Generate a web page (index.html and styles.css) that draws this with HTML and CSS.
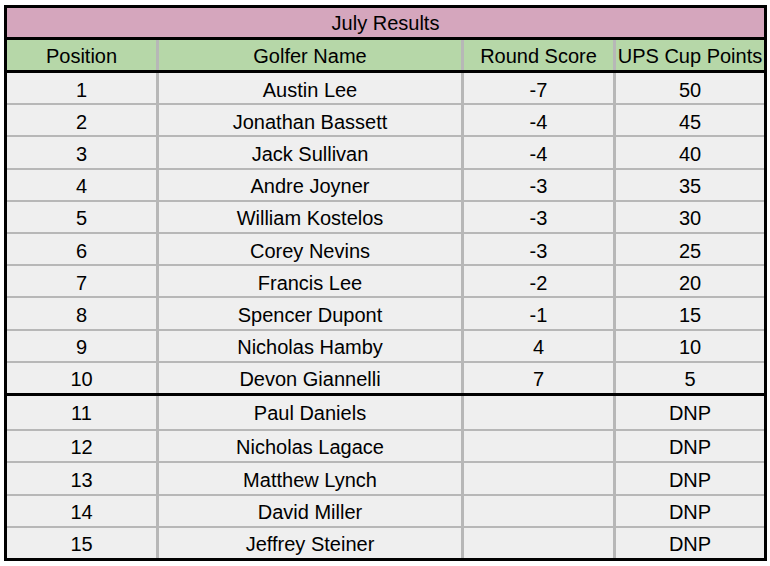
FILE: index.html
```html
<!DOCTYPE html>
<html lang="en">
<head>
<meta charset="utf-8">
<title>July Results</title>
<link rel="stylesheet" href="styles.css">
</head>
<body>
<div class="sheet">
  <div class="title">July Results</div>
  <div class="row head">
    <div class="cell">Position</div>
    <div class="cell">Golfer Name</div>
    <div class="cell">Round Score</div>
    <div class="cell">UPS Cup Points</div>
  </div>
  <div class="group top">
    <div class="row"><div class="cell">1</div><div class="cell">Austin Lee</div><div class="cell">-7</div><div class="cell">50</div></div>
    <div class="row"><div class="cell">2</div><div class="cell">Jonathan Bassett</div><div class="cell">-4</div><div class="cell">45</div></div>
    <div class="row"><div class="cell">3</div><div class="cell">Jack Sullivan</div><div class="cell">-4</div><div class="cell">40</div></div>
    <div class="row"><div class="cell">4</div><div class="cell">Andre Joyner</div><div class="cell">-3</div><div class="cell">35</div></div>
    <div class="row"><div class="cell">5</div><div class="cell">William Kostelos</div><div class="cell">-3</div><div class="cell">30</div></div>
    <div class="row"><div class="cell">6</div><div class="cell">Corey Nevins</div><div class="cell">-3</div><div class="cell">25</div></div>
    <div class="row"><div class="cell">7</div><div class="cell">Francis Lee</div><div class="cell">-2</div><div class="cell">20</div></div>
    <div class="row"><div class="cell">8</div><div class="cell">Spencer Dupont</div><div class="cell">-1</div><div class="cell">15</div></div>
    <div class="row"><div class="cell">9</div><div class="cell">Nicholas Hamby</div><div class="cell">4</div><div class="cell">10</div></div>
    <div class="row"><div class="cell">10</div><div class="cell">Devon Giannelli</div><div class="cell">7</div><div class="cell">5</div></div>
  </div>
  <div class="group bottom">
    <div class="row tall"><div class="cell">11</div><div class="cell">Paul Daniels</div><div class="cell"></div><div class="cell">DNP</div></div>
    <div class="row"><div class="cell">12</div><div class="cell">Nicholas Lagace</div><div class="cell"></div><div class="cell">DNP</div></div>
    <div class="row mid"><div class="cell">13</div><div class="cell">Matthew Lynch</div><div class="cell"></div><div class="cell">DNP</div></div>
    <div class="row"><div class="cell">14</div><div class="cell">David Miller</div><div class="cell"></div><div class="cell">DNP</div></div>
    <div class="row"><div class="cell">15</div><div class="cell">Jeffrey Steiner</div><div class="cell"></div><div class="cell">DNP</div></div>
  </div>
</div>
</body>
</html>
```
FILE: styles.css
```css
html, body {
  margin: 0;
  padding: 0;
  background: #ffffff;
}

body {
  font-family: "Liberation Sans", Arial, sans-serif;
  font-size: 20px;
  color: #000000;
}

.sheet {
  box-sizing: border-box;
  width: 763px;
  margin: 5px 0 0 4px;
  border: 3px solid #000000;
  background: #efefef;
}

.title {
  box-sizing: border-box;
  height: 32px;
  padding-top: 2px;
  display: flex;
  align-items: center;
  justify-content: center;
  background: #d5a6bd;
  border-bottom: 3px solid #000000;
}

.row {
  display: grid;
  grid-template-columns: 149px 302px 149px 148px;
  column-gap: 3px;
  background: #b7b7b7;
  border-bottom: 2px solid #b7b7b7;
}

.cell {
  box-sizing: border-box;
  height: 30px;
  padding-top: 4px;
  display: flex;
  align-items: center;
  justify-content: center;
  background: #efefef;
  white-space: nowrap;
}

.row.head {
  border-bottom: 3px solid #000000;
}

.row.head .cell {
  background: #b6d7a8;
  padding-top: 3px;
}

.group.top .row .cell {
  height: 30.2px;
}

.group.top .row:last-child {
  border-bottom: 3px solid #000000;
}

.group.bottom .row:last-child {
  border-bottom: 0;
}

.row.tall .cell {
  height: 33px;
  padding-top: 3px;
}

.row.mid .cell {
  height: 31px;
}
```
